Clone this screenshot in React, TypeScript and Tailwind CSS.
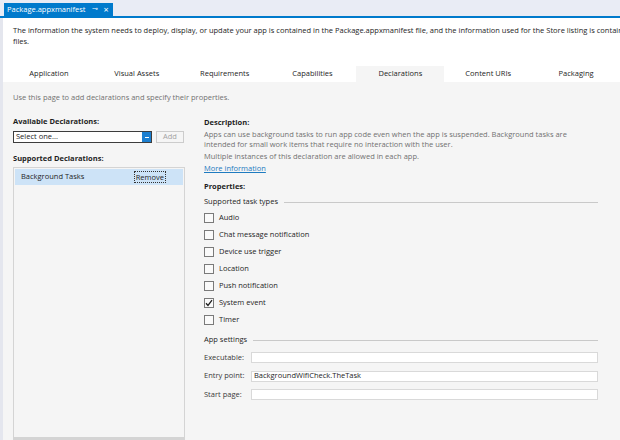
import React from "react";

const tabs = [
  "Application",
  "Visual Assets",
  "Requirements",
  "Capabilities",
  "Declarations",
  "Content URIs",
  "Packaging",
];

const taskTypes = [
  { label: "Audio", checked: false },
  { label: "Chat message notification", checked: false },
  { label: "Device use trigger", checked: false },
  { label: "Location", checked: false },
  { label: "Push notification", checked: false },
  { label: "System event", checked: true },
  { label: "Timer", checked: false },
];

const appSettings = [
  { label: "Executable:", value: "" },
  { label: "Entry point:", value: "BackgroundWifiCheck.TheTask" },
  { label: "Start page:", value: "" },
];

function GroupHeader({ title }: { title: string }) {
  return (
    <div className="flex items-center gap-[6px] h-[14px]">
      <span className="text-[#1e1e1e]">{title}</span>
      <div className="flex-1 h-px bg-[#c9c9c9]" />
    </div>
  );
}

export default function App() {
  return (
    <div
      className="w-[620px] h-[440px] overflow-hidden bg-[#f5f5f5] text-[7.5px] text-[#1e1e1e] flex flex-col"
      style={{ fontFamily: '"Open Sans", "Noto Sans", sans-serif' }}
    >
      {/* document tab strip */}
      <div className="h-[18px] shrink-0 bg-[#e9ecf5] flex items-end pl-[4px] border-b-2 border-[#007acc]">
        <div className="h-[13px] bg-[#007acc] text-white flex items-center gap-[6px] pl-[3px] pr-[4px]">
          <span>Package.appxmanifest</span>
          <span className="text-[7px]">⊸</span>
          <span className="text-[9px] leading-none">×</span>
        </div>
      </div>

      <div className="flex-1 flex flex-col border-l-[3px] border-[#e4e6ee]">
        {/* intro + tabs */}
        <div className="bg-white shrink-0">
          <p className="pl-[10px] pt-[7px] leading-[11px] whitespace-nowrap">
            The information the system needs to deploy, display, or update your app is contained in the Package.appxmanifest file, and the information used for the Store listing is contained in
          </p>
          <p className="pl-[10px] leading-[11px]">files.</p>
          <div className="flex mt-[19px] pl-[2px]">
            {tabs.map((t) => (
              <div
                key={t}
                className={`w-[89.3px] h-[16px] flex items-center justify-center ${
                  t === "Declarations" ? "bg-[#f5f5f5]" : ""
                }`}
              >
                {t}
              </div>
            ))}
          </div>
        </div>

        {/* declarations page */}
        <div className="flex-1 pl-[10px] pt-[10px] flex flex-col">
          <p className="text-[#717171] leading-[11px]">
            Use this page to add declarations and specify their properties.
          </p>

          <div className="flex flex-1 mt-[14px] gap-[17px]">
            {/* left column */}
            <div className="w-[174px] flex flex-col">
              <p className="font-bold leading-[11px] -mt-px">Available Declarations:</p>
              <div className="flex items-center gap-[4px] mt-[4px]">
                <div className="w-[139px] h-[12px] bg-white border border-[#3d3d3d] flex items-center">
                  <span className="flex-1 pl-[2px] leading-none">Select one...</span>
                  <div className="w-[9px] h-full bg-[#1c7fd0] flex items-center justify-center">
                    <div className="w-[4px] h-px bg-white" />
                  </div>
                </div>
                <div className="w-[28px] h-[12px] border border-[#cccccc] text-[#a2a2a2] flex items-center justify-center">
                  Add
                </div>
              </div>
              <p className="font-bold leading-[11px] mt-[10px]">Supported Declarations:</p>
              <div className="flex-1 mt-[3px] w-[172px] border border-[#d4d4d4] border-b-[3px] bg-[#f5f5f5] p-px">
                <div className="h-[16px] bg-[#cde3f7] flex items-center pl-[6px] pr-[17px]">
                  <span className="flex-1">Background Tasks</span>
                  <span className="border border-dotted border-[#333] px-px leading-[10px]">Remove</span>
                </div>
              </div>
            </div>

            {/* right column */}
            <div className="w-[394px] flex flex-col">
              <p className="font-bold leading-[11px]">Description:</p>
              <p className="text-[#717171] leading-[10px] mt-px">
                Apps can use background tasks to run app code even when the app is suspended. Background tasks are intended for small work items that require no interaction with the user.
              </p>
              <p className="text-[#717171] leading-[11px] mt-[2px]">
                Multiple instances of this declaration are allowed in each app.
              </p>
              <p className="text-[#1e7bc0] underline leading-[11px] mt-[1px]">More information</p>
              <p className="font-bold leading-[11px] mt-[7px]">Properties:</p>

              <div className="mt-[3px]">
                <GroupHeader title="Supported task types" />
              </div>
              <div className="flex flex-col gap-[5px] mt-[3px]">
                {taskTypes.map((t) => (
                  <div key={t.label} className="flex items-center gap-[5px] h-[12px]">
                    <div className="w-[10px] h-[10px] border border-[#7a7a7a] bg-[#fafafa] flex items-center justify-center">
                      {t.checked && (
                        <svg width="8" height="8" viewBox="0 0 8 8">
                          <path d="M1 4.2 L3 6.4 L7 1.2" fill="none" stroke="#1e1e1e" strokeWidth="1.3" />
                        </svg>
                      )}
                    </div>
                    <span>{t.label}</span>
                  </div>
                ))}
              </div>

              <div className="mt-[7px]">
                <GroupHeader title="App settings" />
              </div>
              <div className="flex flex-col gap-[7.5px] mt-[5px]">
                {appSettings.map((s) => (
                  <div key={s.label} className="flex items-center h-[11px]">
                    <span className="w-[47px] text-[#3a3a3a]">{s.label}</span>
                    <div className="flex-1 h-[11px] bg-white border border-[#d9d9d9] pl-[2px] flex items-center leading-none">
                      {s.value}
                    </div>
                  </div>
                ))}
              </div>
            </div>
          </div>
        </div>
      </div>
    </div>
  );
}
